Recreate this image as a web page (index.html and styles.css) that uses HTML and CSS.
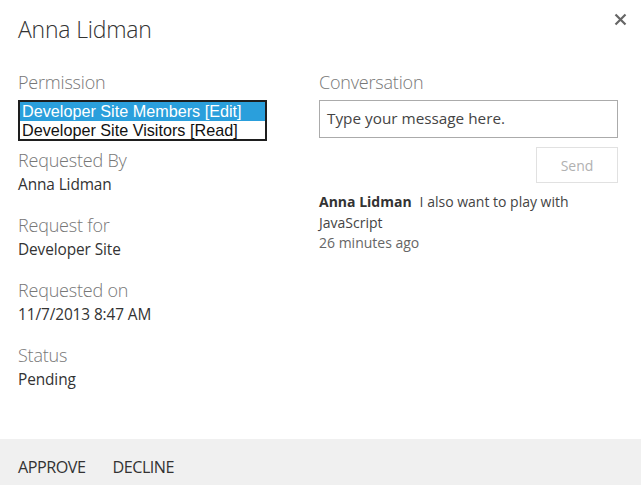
FILE: index.html
```html
<!DOCTYPE html>
<html>
<head>
<meta charset="utf-8">
<link rel="stylesheet" href="styles.css">
</head>
<body>
<div class="dialog">
  <div class="content">
    <div class="header">
      <h1 class="title">Anna Lidman</h1>
      <button class="close" aria-label="Close">
        <svg width="13" height="13" viewBox="0 0 13 13"><path d="M1.5 1.5 L11.5 11.5 M11.5 1.5 L1.5 11.5" stroke="#666" stroke-width="2.2" fill="none"/></svg>
      </button>
    </div>
    <div class="columns">
      <div class="col left">
        <div class="label">Permission</div>
        <div class="listbox">
          <div class="option selected">Developer Site Members [Edit]</div>
          <div class="option">Developer Site Visitors [Read]</div>
        </div>
        <div class="field">
          <div class="label">Requested By</div>
          <div class="value">Anna Lidman</div>
        </div>
        <div class="field">
          <div class="label">Request for</div>
          <div class="value">Developer Site</div>
        </div>
        <div class="field">
          <div class="label">Requested on</div>
          <div class="value">11/7/2013 8:47 AM</div>
        </div>
        <div class="field">
          <div class="label">Status</div>
          <div class="value">Pending</div>
        </div>
      </div>
      <div class="col right">
        <div class="label">Conversation</div>
        <div class="message-box">Type your message here.</div>
        <div class="send-row"><button class="send">Send</button></div>
        <div class="comment">
          <div class="comment-line"><span class="author">Anna Lidman</span><span class="text">I also want to play with</span></div>
          <div class="text-line">JavaScript</div>
        </div>
        <div class="time">26 minutes ago</div>
      </div>
    </div>
  </div>
  <div class="footer">
    <a class="action">APPROVE</a>
    <a class="action">DECLINE</a>
  </div>
</div>
</body>
</html>
```
FILE: styles.css
```css
html, body {
  margin: 0;
  padding: 0;
  background: #fff;
}
body {
  font-family: "Open Sans", "Noto Sans", sans-serif;
  color: #444;
}
.dialog {
  width: 641px;
  height: 485px;
  display: flex;
  flex-direction: column;
}
.content {
  flex: 1;
  padding: 0 18px;
}
.header {
  display: flex;
  justify-content: space-between;
  align-items: flex-start;
  height: 70px;
}
.title {
  margin: 14px 0 0 0;
  font-size: 23px;
  font-weight: 300;
  color: #333;
  line-height: 30px;
  letter-spacing: -0.2px;
}
.close {
  margin: 11px -5px 0 0;
  padding: 0;
  border: 0;
  background: none;
  width: 16px;
  height: 16px;
  display: flex;
  align-items: center;
  justify-content: center;
}
.columns {
  display: flex;
}
.col.left {
  width: 301px;
}
.col.right {
  width: 299px;
}
.label {
  font-size: 18px;
  font-weight: 300;
  color: #777;
  line-height: 25px;
  letter-spacing: -0.2px;
}
.listbox {
  margin-top: 5px;
  width: 249px;
  height: 41px;
  box-sizing: border-box;
  border: 2px solid #1e1e1e;
  font-family: "Liberation Sans", Arial, sans-serif;
  font-size: 16.2px;
  color: #111;
}
.option {
  line-height: 18.5px;
  padding-left: 2px;
  white-space: nowrap;
}
.option.selected {
  background: #2a9fdc;
  color: #fff;
}
.field {
  margin-top: 7px;
  margin-bottom: 17px;
}
.field + .field {
  margin-top: 0;
}
.value {
  font-size: 15.4px;
  color: #333;
  line-height: 23px;
  letter-spacing: -0.1px;
}
.message-box {
  margin-top: 5px;
  border: 1px solid #ababab;
  height: 38px;
  box-sizing: border-box;
  padding: 6px 7px;
  font-size: 15.3px;
  color: #444;
  line-height: 22px;
}
.send-row {
  display: flex;
  justify-content: flex-end;
  margin-top: 9px;
}
.send {
  width: 82px;
  height: 36px;
  border: 1px solid #e1e1e1;
  background: #fff;
  color: #b1b1b1;
  font-family: inherit;
  font-size: 14px;
  padding: 0;
}
.comment {
  margin-top: 8px;
  font-size: 14px;
  line-height: 21px;
  color: #444;
}
.comment-line {
  display: flex;
  gap: 8px;
}
.author {
  font-weight: 700;
  color: #333;
}
.time {
  font-size: 14px;
  line-height: 20px;
  color: #666;
}
.footer {
  height: 46px;
  background: #f0f0f0;
  display: flex;
  align-items: center;
  padding: 10px 18px 0 18px;
  box-sizing: border-box;
  gap: 27px;
}
.action {
  font-size: 16.2px;
  color: #333;
  letter-spacing: -0.5px;
}
```
